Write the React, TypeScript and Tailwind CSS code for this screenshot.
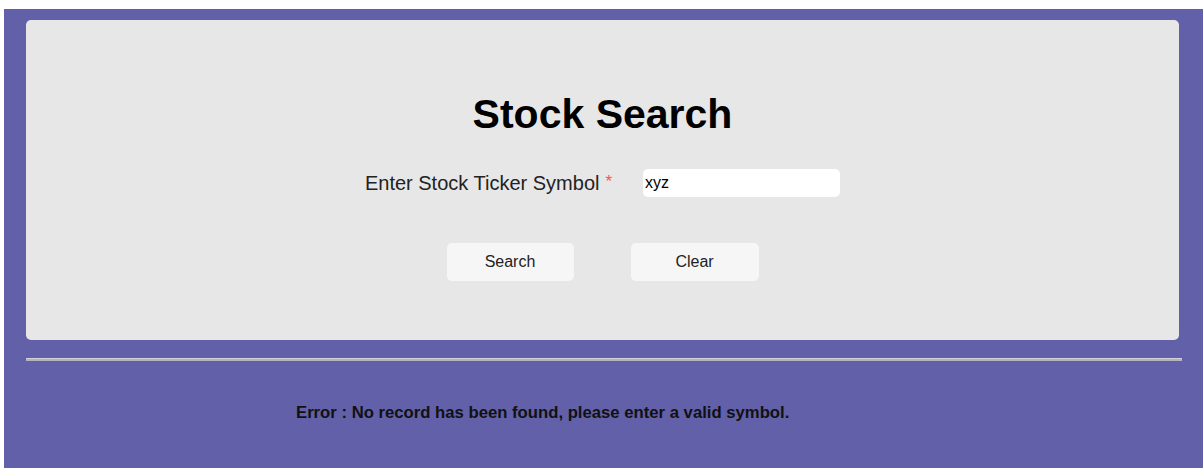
import { useState } from "react";

export default function App() {
    const [ticker, setTicker] = useState("xyz");

    return (
        <div className="w-full h-screen bg-white pt-[9px] pl-[4px] font-['Liberation_Sans',Arial,sans-serif]">
            <div className="h-full bg-[#6160a8] pl-[22px] pt-[11px]">
                <div className="w-[1153px] h-[320px] bg-[#e7e7e7] rounded-[5px] pt-[74px] flex flex-col items-center">
                    <h1 className="text-[41px] leading-none font-bold text-black">
                        Stock Search
                    </h1>

                    <div className="mt-[34px] flex items-center">
                        <label className="text-[20px] leading-none text-[#222]">
                            Enter Stock Ticker Symbol
                            <span className="ml-[6px] align-top text-[17px] text-[#f25858]">*</span>
                        </label>
                        <input
                            value={ticker}
                            onChange={e => setTicker(e.target.value)}
                            className="ml-[31px] w-[197px] h-[28px] bg-white rounded-[5px] pl-[2px] text-[16px] text-black outline-none"
                        />
                    </div>

                    <div className="mt-[46px] flex gap-[57px]">
                        <button className="w-[127px] h-[38px] bg-[#f6f6f6] rounded-[5px] text-[16px] text-[#222]">
                            Search
                        </button>
                        <button className="w-[128px] h-[38px] bg-[#f6f6f6] rounded-[5px] text-[16px] text-[#222]">
                            Clear
                        </button>
                    </div>
                </div>

                <div className="mt-[18px] w-[1156px] h-[3px] border-t border-[#d4d4d8] bg-[#b4b4c0]" />

                <p className="mt-[44px] ml-[270px] text-[16.7px] leading-none font-bold text-[#111]">
                    Error : No record has been found, please enter a valid symbol.
                </p>
            </div>
        </div>
    );
}
